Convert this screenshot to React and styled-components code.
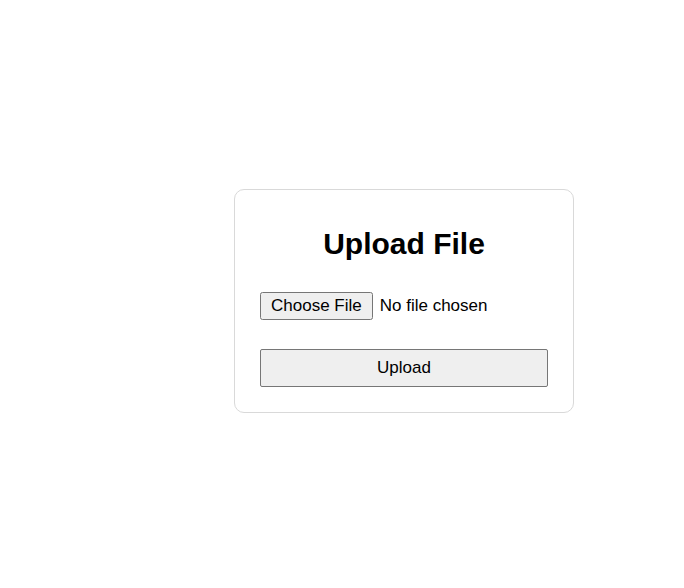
import React from "react";
import styled, { createGlobalStyle } from "styled-components";

const Global = createGlobalStyle`
  html, body { margin: 0; padding: 0; background: #ffffff; }
  body { font-family: "Liberation Sans", Arial, sans-serif; color: #000; }
`;

const Page = styled.div`
  min-height: 588px;
  padding: 189px 0 0 234px;
  box-sizing: border-box;
`;

const Card = styled.div`
  width: 340px;
  box-sizing: border-box;
  border: 1px solid #d9d9d9;
  border-radius: 10px;
  padding: 25px;
  background: #fff;
`;

const Title = styled.h2`
  font-size: 30px;
  font-weight: bold;
  text-align: center;
  margin: 12px 0 31px;
  line-height: normal;
`;

const FileInput = styled.input`
  display: block;
  font-family: "Liberation Sans", Arial, sans-serif;
  font-size: 17px;
  margin: 0 0 29px;

  &::file-selector-button {
    font-family: "Liberation Sans", Arial, sans-serif;
    font-size: 17px;
    padding: 2px 9px;
    margin-inline-end: 7px;
  }
`;

const Button = styled.button`
  display: block;
  width: 100%;
  font-family: "Liberation Sans", Arial, sans-serif;
  font-size: 17px;
  padding: 8px;
  background: #efefef;
  border: 1px solid #767676;
  border-radius: 2px;
  color: #000;
`;

export default function App() {
  return (
    <>
      <Global />
      <Page>
        <Card>
          <Title>Upload File</Title>
          <FileInput type="file" />
          <Button>Upload</Button>
        </Card>
      </Page>
    </>
  );
}
